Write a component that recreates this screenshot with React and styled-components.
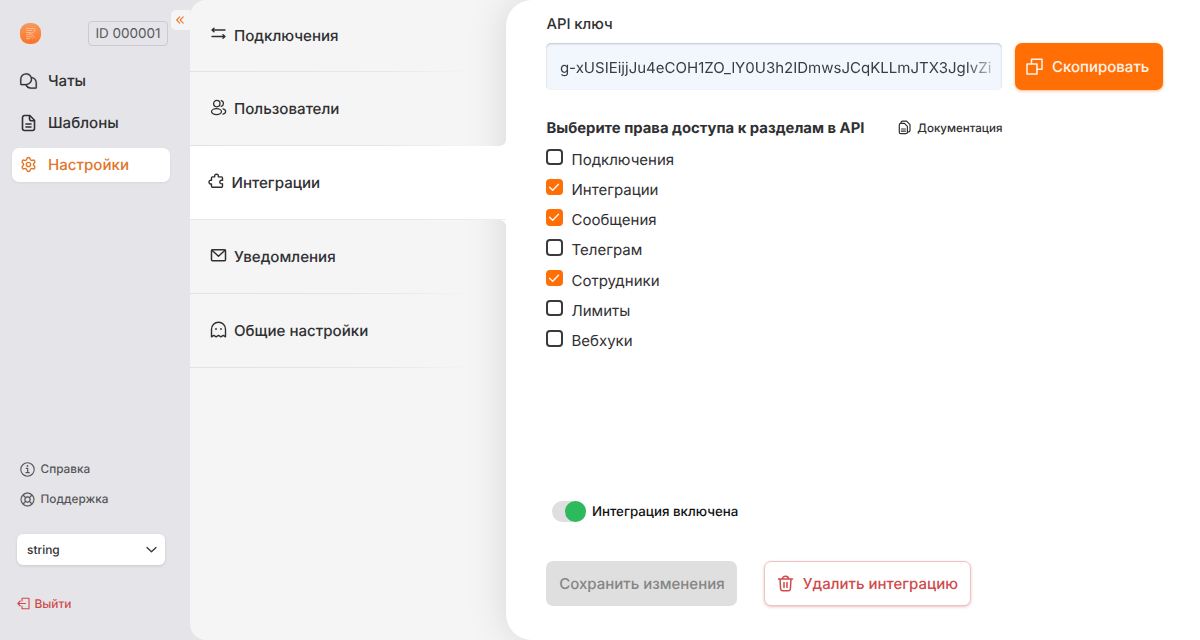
import React, {useState} from 'react';
import styled, {createGlobalStyle, css} from 'styled-components';
import {Settings} from 'lucide-react';
import {PiChatsTeardrop, PiLifebuoy} from 'react-icons/pi';

const ORANGE = '#ff6f06';
const DARK = '#303033';
const RED = '#d04a4c';

const GlobalStyle = createGlobalStyle`
  * {
    box-sizing: border-box;
  }
  body {
    margin: 0;
    overflow: hidden;
    background: #e5e5e9;
    font-family: Inter, 'Liberation Sans', sans-serif;
    color: ${DARK};
    text-rendering: geometricPrecision;
    -webkit-font-smoothing: antialiased;
  }
  button, input {
    font-family: inherit;
    text-rendering: inherit;
  }
`;

const Page = styled.div`
  display: flex;
  width: 1200px;
  height: 640px;
`;

/* ---------- Sidebar ---------- */

const Sidebar = styled.aside`
  position: relative;
  display: flex;
  flex-direction: column;
  flex: 0 0 190px;
  background: #e5e5e9;
`;

const SidebarHeader = styled.div`
  display: flex;
  align-items: center;
  justify-content: space-between;
  height: 26px;
  margin: 20px 22px 0 20px;
`;

const AccountId = styled.div`
  width: 80px;
  height: 25px;
  border: 1px solid #cbcbcf;
  border-radius: 4px;
  font-size: 13.5px;
  line-height: 24px;
  text-align: center;
  color: #58585c;
  white-space: nowrap;
`;

const Collapse = styled.button`
  position: absolute;
  top: 10px;
  right: 0;
  display: flex;
  align-items: center;
  justify-content: center;
  width: 19px;
  height: 20px;
  padding: 0 1px 0 0;
  border: 0;
  border-radius: 5px 0 0 5px;
  background: #f5f5f5;
  color: #e07a30;
`;

const MainNav = styled.nav`
  display: flex;
  flex-direction: column;
  gap: 8px;
  margin: 18px 20px 0 12px;
`;

const MainNavItem = styled.a`
  display: flex;
  align-items: center;
  gap: 9px;
  height: 34px;
  padding: 0 0 1px 7px;
  border-radius: 7px;
  font-size: 15.1px;
  font-weight: 500;
  color: ${props => (props.$active ? '#df762c' : DARK)};
  background: ${props => (props.$active ? '#fff' : 'transparent')};
  box-shadow: ${props =>
    props.$active ? '0 1px 3px rgba(0, 0, 0, 0.06)' : 'none'};
`;

const NavIcon = styled.span`
  display: flex;
  align-items: center;
  justify-content: center;
  width: 19px;
  margin-right: 1px;
`;

const HelpNav = styled.nav`
  display: flex;
  flex-direction: column;
  gap: 10px;
  margin: auto 20px 0 19px;
`;

const HelpLink = styled.a`
  display: flex;
  align-items: center;
  gap: 4.5px;
  height: 20px;
  font-size: 11.8px;
  font-weight: 500;
  line-height: 16px;
  color: #56565a;
`;

const Select = styled.button`
  display: flex;
  align-items: center;
  justify-content: space-between;
  height: 31px;
  margin: 25px 25px 0 17px;
  padding: 0 8px 0 10px;
  border: 0;
  border-radius: 6px;
  background: #fff;
  box-shadow: 0 1px 3px rgba(0, 0, 0, 0.12);
  font-size: 11.9px;
  font-weight: 500;
  color: ${DARK};
`;

const Logout = styled.a`
  display: flex;
  align-items: center;
  gap: 4.5px;
  height: 20px;
  margin: 28px 0 27px 17px;
  font-size: 11.9px;
  font-weight: 500;
  color: ${RED};
`;

/* ---------- Settings menu ---------- */

const Workspace = styled.main`
  display: flex;
  flex: 1;
  min-width: 0;
  background: #f5f5f5;
  border-radius: 16px 0 0 16px;
  overflow: hidden;
`;

const Menu = styled.nav`
  flex: 0 0 316px;
`;

const cornerCut = css`
  content: '';
  position: absolute;
  right: 0;
  width: 6px;
  height: 6px;
`;

const MenuItem = styled.a`
  display: flex;
  align-items: center;
  gap: 7px;
  height: 74px;
  padding: 0 0 1px ${props => (props.$active ? 17.5 : 20)}px;
  font-size: 15.1px;
  font-weight: 500;
  background: linear-gradient(90deg, #e2e2e2 0%, #e6e6e6 60%, #f5f5f500 90%)
    bottom / 100% 1px no-repeat;

  &:first-child {
    height: 72px;
    padding-bottom: 2px;
  }

  svg {
    flex: 0 0 17px;
    margin-bottom: 3px;
  }

  ${props =>
    props.$active &&
    css`
      position: relative;
      z-index: 2;
      background: linear-gradient(90deg, #e6e6e6, #ececec) bottom / 100% 1px
        no-repeat #fff;

      &::before {
        ${cornerCut}
        top: -6px;
        background: radial-gradient(circle at 0 0, #fff0 5.5px, #fff 6px);
      }
      &::after {
        ${cornerCut}
        bottom: -6px;
        background: radial-gradient(circle at 0 100%, #fff0 5.5px, #fff 6px);
      }
    `}
`;

/* ---------- Integration form ---------- */

const Content = styled.section`
  display: flex;
  flex-direction: column;
  flex: 1;
  min-width: 0;
  padding: 13px 37px 0 40.4px;
  border-radius: 26px 0 0 26px;
  background: #fff;
  box-shadow: 0 0 40px rgba(0, 0, 0, 0.13);
`;

const Label = styled.label`
  height: 20px;
  font-size: 14.8px;
  font-weight: 500;
  line-height: 22px;
`;

const KeyRow = styled.div`
  display: flex;
  gap: 13px;
  height: 47px;
  margin-top: 10px;
`;

const KeyField = styled.div`
  flex: 0 0 455.5px;
  min-width: 0;
  padding: 0 11px 0 13.5px;
  border-radius: 5px;
  background: #f2f7fd;
  box-shadow: inset 0 1px 2px rgba(60, 80, 100, 0.3);
`;

const KeyText = styled.div`
  overflow: hidden;
  font-size: 15.02px;
  line-height: 49px;
  color: #3c3c40;
  white-space: nowrap;
  mask-image: linear-gradient(90deg, #000 94%, transparent 103%);
`;

const Button = styled.button`
  display: flex;
  align-items: center;
  justify-content: center;
  border: 0;
  border-radius: 7px;
  padding: 0;
  font-size: 15px;
  font-weight: 500;
  white-space: nowrap;
`;

const CopyButton = styled(Button)`
  gap: 8.5px;
  flex: 0 0 148px;
  padding: 0 2px 1px 0;
  background: ${ORANGE};
  box-shadow: 0 1px 3px rgba(255, 111, 6, 0.5);
  color: #fff3e8;
`;

const AccessHeader = styled.div`
  display: flex;
  align-items: center;
  justify-content: space-between;
  width: 456px;
  height: 20px;
  margin-top: 28px;
`;

const Title = styled.h2`
  margin: 0;
  font-size: 14.83px;
  font-weight: 700;
  line-height: 20px;
  white-space: nowrap;
`;

const DocsLink = styled.a`
  display: flex;
  align-items: center;
  gap: 5px;
  height: 20px;
  padding-bottom: 1px;
  font-size: 11.55px;
  font-weight: 500;
`;

const Permissions = styled.div`
  display: flex;
  flex-direction: column;
  margin: 4px 0 0 -0.4px;
`;

const Permission = styled.label`
  display: flex;
  gap: 9px;
  height: 30.25px;
  padding-top: 6.5px;
  font-size: 15.02px;
  line-height: 22px;
`;

const Box = styled.span`
  display: flex;
  align-items: center;
  justify-content: center;
  width: 16.5px;
  height: 16.5px;
  border: 2px solid ${props => (props.$checked ? ORANGE : '#3a3a3e')};
  border-radius: 4px;
  background: ${props => (props.$checked ? ORANGE : '#fff')};
`;

const SwitchRow = styled.label`
  display: flex;
  align-items: center;
  gap: 6px;
  height: 22px;
  margin: auto 0 0 5.5px;
  padding-top: 1px;
  font-size: 13.3px;
  font-weight: 500;
  line-height: 22px;
  color: #111;
`;

const Track = styled.span`
  display: flex;
  justify-content: ${props => (props.$on ? 'flex-end' : 'flex-start')};
  width: 34px;
  height: 21px;
  border-radius: 11px;
  background: #dfdfe2;
`;

const Thumb = styled.span`
  width: 21px;
  height: 21px;
  border-radius: 50%;
  background: #2cba5c;
`;

const Actions = styled.div`
  display: flex;
  gap: 27px;
  height: 45px;
  margin: 39px 0 34px;
`;

const SaveButton = styled(Button)`
  width: 191px;
  height: 44.500px;
  background: #dfdfdf;
  color: #858585;
`;

const DeleteButton = styled(Button)`
  gap: 9px;
  width: 207px;
  height: 45px;
  padding: 0 1px 1px 0;
  border: 1px solid #ecc4c6;
  background: #fff;
  box-shadow: 0 1px 3px rgba(208, 74, 76, 0.35);
  color: ${RED};
`;

/* ---------- Icons ---------- */

const Icon = ({size = 18, w = 1.5, box = 18, children}) => (
  <svg
    width={size}
    height={size}
    viewBox={`0 0 ${box} ${box}`}
    fill="none"
    stroke="currentColor"
    strokeWidth={w}
    strokeLinecap="round"
    strokeLinejoin="round"
  >
    {children}
  </svg>
);

const Logo = () => (
  <svg width="21" height="21" viewBox="0 0 21 21" fill="none">
    <defs>
      <linearGradient id="logo" x1="0" y1="0" x2="0" y2="1">
        <stop offset="0" stopColor="#f79a5e" />
        <stop offset="1" stopColor="#fb7424" />
      </linearGradient>
    </defs>
    <rect width="21" height="21" rx="9" fill="url(#logo)" />
    <path
      d="M6 5.500h8q1.500 0 1 1.500L13.500 10H8.500M6 7.500h6.500M6 9.500h5M6 11.700h6l3.500 3.300M6 13.700h5l2 1.800M6 15.700h4"
      stroke="#ffc096"
      strokeWidth="0.9"
    />
  </svg>
);

const DocumentIcon = () => (
  <Icon w={1.6}>
    <path d="M4.500 1.500h5.300l4.700 4.700v8.300a2 2 0 0 1-2 2h-8a2 2 0 0 1-2-2v-11a2 2 0 0 1 2-2z" />
    <path d="M9.500 1.800v3a2 2 0 0 0 2 2h2.800M6 10h5M6 13h5" />
  </Icon>
);

const InfoIcon = () => (
  <Icon size={17} box={17} w={1.1}>
    <circle cx="8.500" cy="8.500" r="6.700" />
    <path d="M7.200 7.300h1.500v4.200M7 11.700h3.200" strokeWidth="1.200" />
    <circle cx="8.500" cy="4.900" r="0.900" fill="currentColor" stroke="none" />
  </Icon>
);

const SwapIcon = () => (
  <Icon size={17} box={17} w={1.4}>
    <path d="M15 5H2M4 3.200 2 5l2 1.800M2 11.500h13M13 9.700l2 1.800-2 1.800" />
  </Icon>
);

const UsersIcon = () => (
  <Icon size={17} box={17} w={1.3}>
    <circle cx="6.800" cy="4.600" r="3.200" />
    <ellipse cx="6.500" cy="12.600" rx="5" ry="3" />
    <path d="M11.200 1.600a3 3 0 0 1 0 5.800M13 9.900c3.500.8 3.500 4.400 0 5.200" />
  </Icon>
);

const PuzzleIcon = () => (
  <Icon size={17} box={17} w={1.4}>
    <path d="M4.500 3.900h2.200c-.4-1.700.4-2.700 1.800-2.700s2.200 1 1.800 2.700h3.200q1 0 1 1v2.500c-1.700-.4-2.700.5-2.700 1.700s1 2.100 2.700 1.700v2.500q0 1-1 1h-9q-1 0-1-1v-2.400c-1.500.4-2.500-.5-2.500-1.800s1-2.200 2.500-1.800V4.900q0-1 1-1z" />
  </Icon>
);

const MailIcon = () => (
  <Icon size={17} box={17} w={1.5}>
    <rect x="1.500" y="2.700" width="14" height="11" rx="1" />
    <path d="m2 3.200 6.500 6 6.500-6" />
  </Icon>
);

const GhostIcon = () => (
  <Icon size={17} box={17} w={1.400}>
    <path d="M1.500 15.800V8.200a7 7 0 0 1 14 0v7.600l-2.300-1.400-2.300 1.400-2.400-1.400-2.400 1.400-2.300-1.400z" />
    <circle cx="6" cy="8" r="0.900" fill="currentColor" stroke="none" />
    <circle cx="11" cy="8" r="0.900" fill="currentColor" stroke="none" />
  </Icon>
);

const CopyIcon = () => (
  <Icon size={17} box={17} w={1.5}>
    <path d="M1 6h10v10H1z" />
    <path d="M5.500 6V1.200H16v10h-5" />
  </Icon>
);

const DocsIcon = () => (
  <Icon size={15} box={15} w={1.2}>
    <path d="M3.800 3.400h3.600l3 3v5.800q0 1.500-1.500 1.500H3.800q-1.500 0-1.500-1.500V4.900q0-1.500 1.500-1.500z" />
    <path d="M4 3.200Q4 1.200 5.700 1.200h3.900l3.400 3.400v5.600q0 1.700-2.300 1.900M4.400 9h4M4.400 11.200h4" />
  </Icon>
);

const TrashIcon = () => (
  <Icon size={17} box={17} w={1.5}>
    <path d="M1.500 4h14M5.500 4c0-1.700.9-2.700 3-2.700s3 1 3 2.700M3 4l.6 9.800q.2 2 2.100 2h5.600q1.900 0 2.100-2L14 4M7 7.500v5M10 7.500v5" />
  </Icon>
);

const LogoutIcon = () => (
  <Icon size={13} box={13} w={1.1}>
    <path d="M5 4V1.200h7v10.600H5V9M8.500 6.500H.8M3.200 4 .8 6.500 3.200 9" />
  </Icon>
);

const menu = [
  {title: 'Подключения', icon: <SwapIcon />},
  {title: 'Пользователи', icon: <UsersIcon />},
  {title: 'Интеграции', icon: <PuzzleIcon />, active: true},
  {title: 'Уведомления', icon: <MailIcon />},
  {title: 'Общие настройки', icon: <GhostIcon />}
];

const initialPermissions = [
  ['Подключения', false],
  ['Интеграции', true],
  ['Сообщения', true],
  ['Телеграм', false],
  ['Сотрудники', true],
  ['Лимиты', false],
  ['Вебхуки', false]
];

const App = () => {
  const [permissions, setPermissions] = useState(initialPermissions);
  const [enabled, setEnabled] = useState(true);

  const toggle = index =>
    setPermissions(
      permissions.map(([name, on], i) => [name, i === index ? !on : on])
    );

  return (
    <Page>
      <GlobalStyle />
      <Sidebar>
        <SidebarHeader>
          <Logo />
          <AccountId>ID 000001</AccountId>
        </SidebarHeader>
        <Collapse>
          <Icon size={8} box={8} w={1.1}>
            <path d="M3.700.8.7 4l3 3.200M7.200.8l-3 3.200 3 3.200" />
          </Icon>
        </Collapse>
        <MainNav>
          <MainNavItem>
            <NavIcon>
              <PiChatsTeardrop size={20} strokeWidth={3} />
            </NavIcon>
            Чаты
          </MainNavItem>
          <MainNavItem>
            <NavIcon>
              <DocumentIcon />
            </NavIcon>
            Шаблоны
          </MainNavItem>
          <MainNavItem $active>
            <NavIcon>
              <Settings size={17} strokeWidth={2} />
            </NavIcon>
            Настройки
          </MainNavItem>
        </MainNav>
        <HelpNav>
          <HelpLink>
            <InfoIcon />
            Справка
          </HelpLink>
          <HelpLink>
            <PiLifebuoy size={17} strokeWidth={4} />
            Поддержка
          </HelpLink>
        </HelpNav>
        <Select>
          string
          <Icon size={11} box={11} w={1.2}>
            <path d="m1 3.500 4.500 4.300L10 3.500" />
          </Icon>
        </Select>
        <Logout>
          <LogoutIcon />
          Выйти
        </Logout>
      </Sidebar>
      <Workspace>
        <Menu>
          {menu.map(item => (
            <MenuItem key={item.title} $active={item.active}>
              {item.icon}
              {item.title}
            </MenuItem>
          ))}
        </Menu>
        <Content>
          <Label>API ключ</Label>
          <KeyRow>
            <KeyField>
              <KeyText>g-xUSIEijjJu4eCOH1ZO_lY0U3h2IDmwsJCqKLLmJTX3JgIvZi</KeyText>
            </KeyField>
            <CopyButton>
              <CopyIcon />
              Скопировать
            </CopyButton>
          </KeyRow>
          <AccessHeader>
            <Title>Выберите права доступа к разделам в API</Title>
            <DocsLink>
              <DocsIcon />
              Документация
            </DocsLink>
          </AccessHeader>
          <Permissions>
            {permissions.map(([name, checked], i) => (
              <Permission key={name} onClick={() => toggle(i)}>
                <Box $checked={checked}>
                  {checked && (
                    <Icon size={12} box={12} w={1.3}>
                      <path d="m1.500 6.200 3.200 3.100 5.800-6" stroke="#fff" />
                    </Icon>
                  )}
                </Box>
                {name}
              </Permission>
            ))}
          </Permissions>
          <SwitchRow onClick={() => setEnabled(!enabled)}>
            <Track $on={enabled}>
              <Thumb />
            </Track>
            Интеграция включена
          </SwitchRow>
          <Actions>
            <SaveButton disabled>Сохранить изменения</SaveButton>
            <DeleteButton>
              <TrashIcon />
              Удалить интеграцию
            </DeleteButton>
          </Actions>
        </Content>
      </Workspace>
    </Page>
  );
};

export default App;
